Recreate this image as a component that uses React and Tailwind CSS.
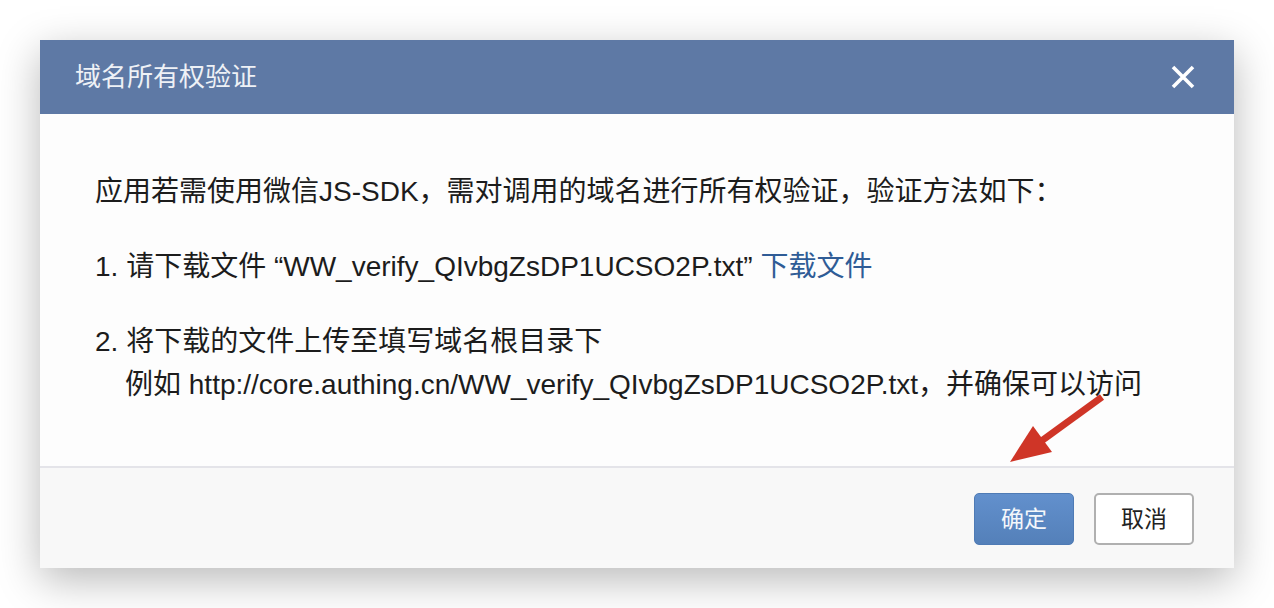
import React from "react";

export default function App() {
  const font = { fontFamily: '"Liberation Sans", "Noto Sans CJK SC", sans-serif' };
  return (
    <div className="w-[1274px] h-[608px] bg-white p-[40px] relative overflow-hidden" style={font}>
      <div className="w-[1194px] h-[528px] flex flex-col bg-[#fdfdfd] shadow-[0_12px_40px_rgba(0,0,0,0.28)]">
        <div className="h-[74px] bg-[#5e79a5] flex items-center justify-between pl-[35px] pr-[40px]">
          <span className="text-[26px] text-[#eef1f6] leading-none">域名所有权验证</span>
          <svg width="26" height="26" viewBox="0 0 26 26" className="mr-[-2px]">
            <path d="M3 3 L23 23 M23 3 L3 23" stroke="#fff" strokeWidth="3.6" strokeLinecap="butt" />
          </svg>
        </div>
        <div className="flex-1 pt-[56px] pl-[55px] text-[28px] leading-[43px] text-[#1c1c1c]">
          <p>应用若需使用微信JS-SDK，需对调用的域名进行所有权验证，验证方法如下：</p>
          <p className="mt-[32px]">
            1. 请下载文件 “WW_verify_QIvbgZsDP1UCSO2P.txt” <span className="text-[#2f5c96]">下载文件</span>
          </p>
          <div className="mt-[32px]">
            <p>2. 将下载的文件上传至填写域名根目录下</p>
            <p className="pl-[30px]">例如 http://core.authing.cn/WW_verify_QIvbgZsDP1UCSO2P.txt，并确保可以访问</p>
          </div>
        </div>
        <div className="h-[2px] bg-[#e4e4e9]" />
        <div className="h-[100px] bg-[#f8f8f8] flex items-start justify-end gap-[20px] pt-[25px] pr-[40px]">
          <button className="w-[100px] h-[52px] rounded-[5px] border border-[#4f7bb5] bg-gradient-to-b from-[#6290cd] to-[#5480b9] text-[#f4f7fb] text-[23px]">
            确定
          </button>
          <button className="w-[100px] h-[52px] rounded-[5px] border-2 border-[#b0b0b0] bg-white text-[#222] text-[23px]">
            取消
          </button>
        </div>
      </div>
      <svg className="absolute left-0 top-0 pointer-events-none" width="1274" height="608">
        <line x1="1102" y1="397" x2="1040" y2="442" stroke="#cf3527" strokeWidth="7" />
        <polygon points="1010,462 1033,426 1052,452" fill="#cf3527" />
      </svg>
    </div>
  );
}
